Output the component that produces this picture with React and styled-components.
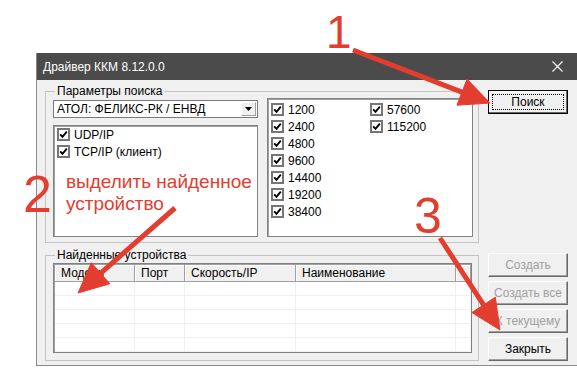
import React from 'react';
import styled, { createGlobalStyle } from 'styled-components';

const GlobalStyle = createGlobalStyle`
  html, body { margin: 0; padding: 0; background: #fff; }
  body { font-family: "Liberation Sans", Arial, sans-serif; }
`;

const RED = '#e33d2f';

const Page = styled.div`
  position: relative;
  box-sizing: border-box;
  width: 577px;
  height: 369px;
  padding: 53px 0 0 36px;
  overflow: hidden;
  background: #fff;
`;

const Window = styled.div`
  width: 546px;
  border-left: 1px solid #8a8a8a;
  border-bottom: 1px solid #8a8a8a;
  font-size: 12px;
  color: #000;
`;

const TitleBar = styled.div`
  height: 27px;
  background: #4b4b4b;
  color: #fff;
  display: flex;
  align-items: center;
  justify-content: space-between;
  padding: 0 20px 0 6px;
`;

const Title = styled.span`
  font-size: 12px;
`;

const Body = styled.div`
  background: #f0f0f0;
  display: flex;
  gap: 9px;
  padding: 4px 0 4px 8px;
`;

const Main = styled.div`
  width: 434px;
  display: flex;
  flex-direction: column;
  gap: 5px;
`;

const Group = styled.fieldset`
  margin: 0;
  padding: ${p => p.$pad};
  border: 1px solid #c4c4c4;
  min-width: 0;
`;

const Legend = styled.legend`
  padding: 0 2px;
  margin-left: 2px;
  font-size: 12px;
  line-height: 14px;
`;

const SearchRow = styled.div`
  display: flex;
  gap: 9px;
  height: 139px;
`;

const LeftCol = styled.div`
  width: 205px;
  display: flex;
  flex-direction: column;
  gap: 7px;
  padding-top: 2px;
`;

const Combo = styled.div`
  box-sizing: border-box;
  height: 18px;
  background: #fff;
  border: 1px solid #7a7a7a;
  display: flex;
  align-items: stretch;
  justify-content: space-between;
  padding: 1px 1px 1px 3px;
`;

const ComboText = styled.span`
  line-height: 14px;
`;

const ComboArrow = styled.span`
  box-sizing: border-box;
  width: 15px;
  background: #f0f0f0;
  border: 1px solid;
  border-color: #fff #a0a0a0 #a0a0a0 #fff;
  display: flex;
  align-items: center;
  justify-content: center;
`;

const ListBox = styled.div`
  box-sizing: border-box;
  background: #fff;
  border: 1px solid #828282;
  box-shadow: inset 1px 1px 0 #a0a0a0;
  flex: ${p => (p.$grow ? 1 : 'none')};
  width: ${p => p.$w || 'auto'};
  padding: ${p => p.$pad || '0 0 0 3px'};
`;

const BaudGrid = styled.div`
  display: grid;
  grid-auto-flow: column;
  grid-template-rows: repeat(7, 17px);
  grid-template-columns: 99px auto;
`;

const Item = styled.label`
  display: flex;
  align-items: center;
  gap: 4px;
  height: 17px;
`;

const CheckBox = styled.span`
  box-sizing: border-box;
  width: 13px;
  height: 13px;
  border: 2px solid #767676;
  background: #fff;
  display: flex;
  align-items: center;
  justify-content: center;
`;

const Table = styled.div`
  box-sizing: border-box;
  height: 90px;
  background: #fff;
  border: 1px solid #828282;
  box-shadow: inset 1px 1px 0 #a0a0a0;
  display: grid;
  grid-template-columns: 80px 50px 111px 160px 1fr;
  grid-template-rows: 17px repeat(5, 14px);
  padding: 1px 0 0 1px;
`;

const HeadCell = styled.div`
  background: #f0f0f0;
  border-right: 1px solid #a0a0a0;
  border-bottom: 1px solid #a0a0a0;
  box-shadow: inset 1px 1px 0 #fff;
  padding-left: 6px;
  line-height: 16px;
  white-space: nowrap;
  overflow: hidden;
`;

const Cell = styled.div`
  border-right: 1px solid #f0f0f0;
  border-bottom: 1px solid #f0f0f0;
`;

const Side = styled.div`
  width: 80px;
  display: flex;
  flex-direction: column;
  justify-content: space-between;
  padding-top: 6px;
`;

const ButtonStack = styled.div`
  display: flex;
  flex-direction: column;
  gap: 4px;
`;

const Button = styled.div`
  box-sizing: border-box;
  height: 24px;
  background: #f0f0f0;
  border: 1px solid;
  border-color: ${p => (p.$default ? '#000' : '#fff #696969 #696969 #fff')};
  box-shadow: ${p => (p.$default ? 'inset -1px -1px 0 #696969, inset 1px 1px 0 #fff' : 'inset -1px -1px 0 #a0a0a0')};
  color: ${p => (p.$disabled ? '#a0a0a0' : '#000')};
  display: flex;
  align-items: center;
  justify-content: center;
  padding: 3px;
`;

const Focus = styled.span`
  flex: 1;
  align-self: stretch;
  border: 1px dotted #000;
  display: flex;
  align-items: center;
  justify-content: center;
`;

const Overlay = styled.svg`
  position: absolute;
  left: 0;
  top: 0;
  pointer-events: none;
`;

const Number = styled.div`
  position: absolute;
  left: ${p => p.$x}px;
  top: ${p => p.$y}px;
  font-size: ${p => p.$size}px;
  line-height: 1;
  color: ${RED};
`;

const Note = styled.div`
  position: absolute;
  left: 66px;
  top: 171px;
  font-size: 19px;
  line-height: 22px;
  color: ${RED};
`;

function Check() {
  return (
    <CheckBox>
      <svg width="9" height="9" viewBox="0 0 9 9">
        <path d="M1.2 4.3 L3.5 6.8 L7.8 1.6" fill="none" stroke="#000" strokeWidth="1.9" />
      </svg>
    </CheckBox>
  );
}

function Arrow({ from, to }) {
  const dx = to[0] - from[0];
  const dy = to[1] - from[1];
  const len = Math.sqrt(dx * dx + dy * dy);
  const ux = dx / len, uy = dy / len;
  const bx = to[0] - 30 * ux, by = to[1] - 30 * uy;
  const px = -uy * 14, py = ux * 14;
  const pts = `${to[0]},${to[1]} ${bx + px},${by + py} ${bx - px},${by - py}`;
  return (
    <g fill={RED} stroke={RED}>
      <line x1={from[0]} y1={from[1]} x2={bx + 2 * ux} y2={by + 2 * uy} strokeWidth="5" />
      <polygon points={pts} strokeWidth="1" strokeLinejoin="round" />
    </g>
  );
}

const bauds = ['1200', '2400', '4800', '9600', '14400', '19200', '38400', '57600', '115200'];
const columns = ['Модель', 'Порт', 'Скорость/IP', 'Наименование', ''];

export default function App() {
  return (
    <>
      <GlobalStyle />
      <Page>
        <Window>
          <TitleBar>
            <Title>Драйвер ККМ 8.12.0.0</Title>
            <svg width="11" height="11" viewBox="0 0 11 11">
              <path d="M0.5 0.5 L10.5 10.5 M10.5 0.5 L0.5 10.5" stroke="#fff" strokeWidth="1.1" />
            </svg>
          </TitleBar>
          <Body>
            <Main>
              <Group $pad="0 5px 5px 7px">
                <Legend>Параметры поиска</Legend>
                <SearchRow>
                  <LeftCol>
                    <Combo>
                      <ComboText>АТОЛ: ФЕЛИКС-РК / ЕНВД</ComboText>
                      <ComboArrow>
                        <svg width="7" height="4" viewBox="0 0 7 4">
                          <path d="M0 0 L7 0 L3.5 4 Z" fill="#000" />
                        </svg>
                      </ComboArrow>
                    </Combo>
                    <ListBox $grow>
                      <Item><Check />UDP/IP</Item>
                      <Item><Check />TCP/IP (клиент)</Item>
                    </ListBox>
                  </LeftCol>
                  <ListBox $w="206px" $pad="2px 0 0 3px">
                    <BaudGrid>
                      {bauds.map(b => (
                        <Item key={b}><Check />{b}</Item>
                      ))}
                    </BaudGrid>
                  </ListBox>
                </SearchRow>
              </Group>
              <Group $pad="1px 6px 7px 7px">
                <Legend>Найденные устройства</Legend>
                <Table>
                  {columns.map((c, i) => (
                    <HeadCell key={i}>{c}</HeadCell>
                  ))}
                  {Array.from({ length: 25 }).map((_, i) => (
                    <Cell key={i} />
                  ))}
                </Table>
              </Group>
            </Main>
            <Side>
              <Button $default><Focus>Поиск</Focus></Button>
              <ButtonStack>
                <Button $disabled>Создать</Button>
                <Button $disabled>Создать все</Button>
                <Button $disabled>К текущему</Button>
                <Button>Закрыть</Button>
              </ButtonStack>
            </Side>
          </Body>
        </Window>

        <Overlay width="577" height="369" viewBox="0 0 577 369">
          <Arrow from={[353, 50]} to={[490, 103]} />
          <Arrow from={[175, 208]} to={[78, 293]} />
          <Arrow from={[440, 238]} to={[500, 330]} />
        </Overlay>
        <Number $x={326} $y={9} $size={46}>1</Number>
        <Number $x={23} $y={168} $size={52}>2</Number>
        <Number $x={414} $y={191} $size={50}>3</Number>
        <Note>выделить найденное<br />устройство</Note>
      </Page>
    </>
  );
}
